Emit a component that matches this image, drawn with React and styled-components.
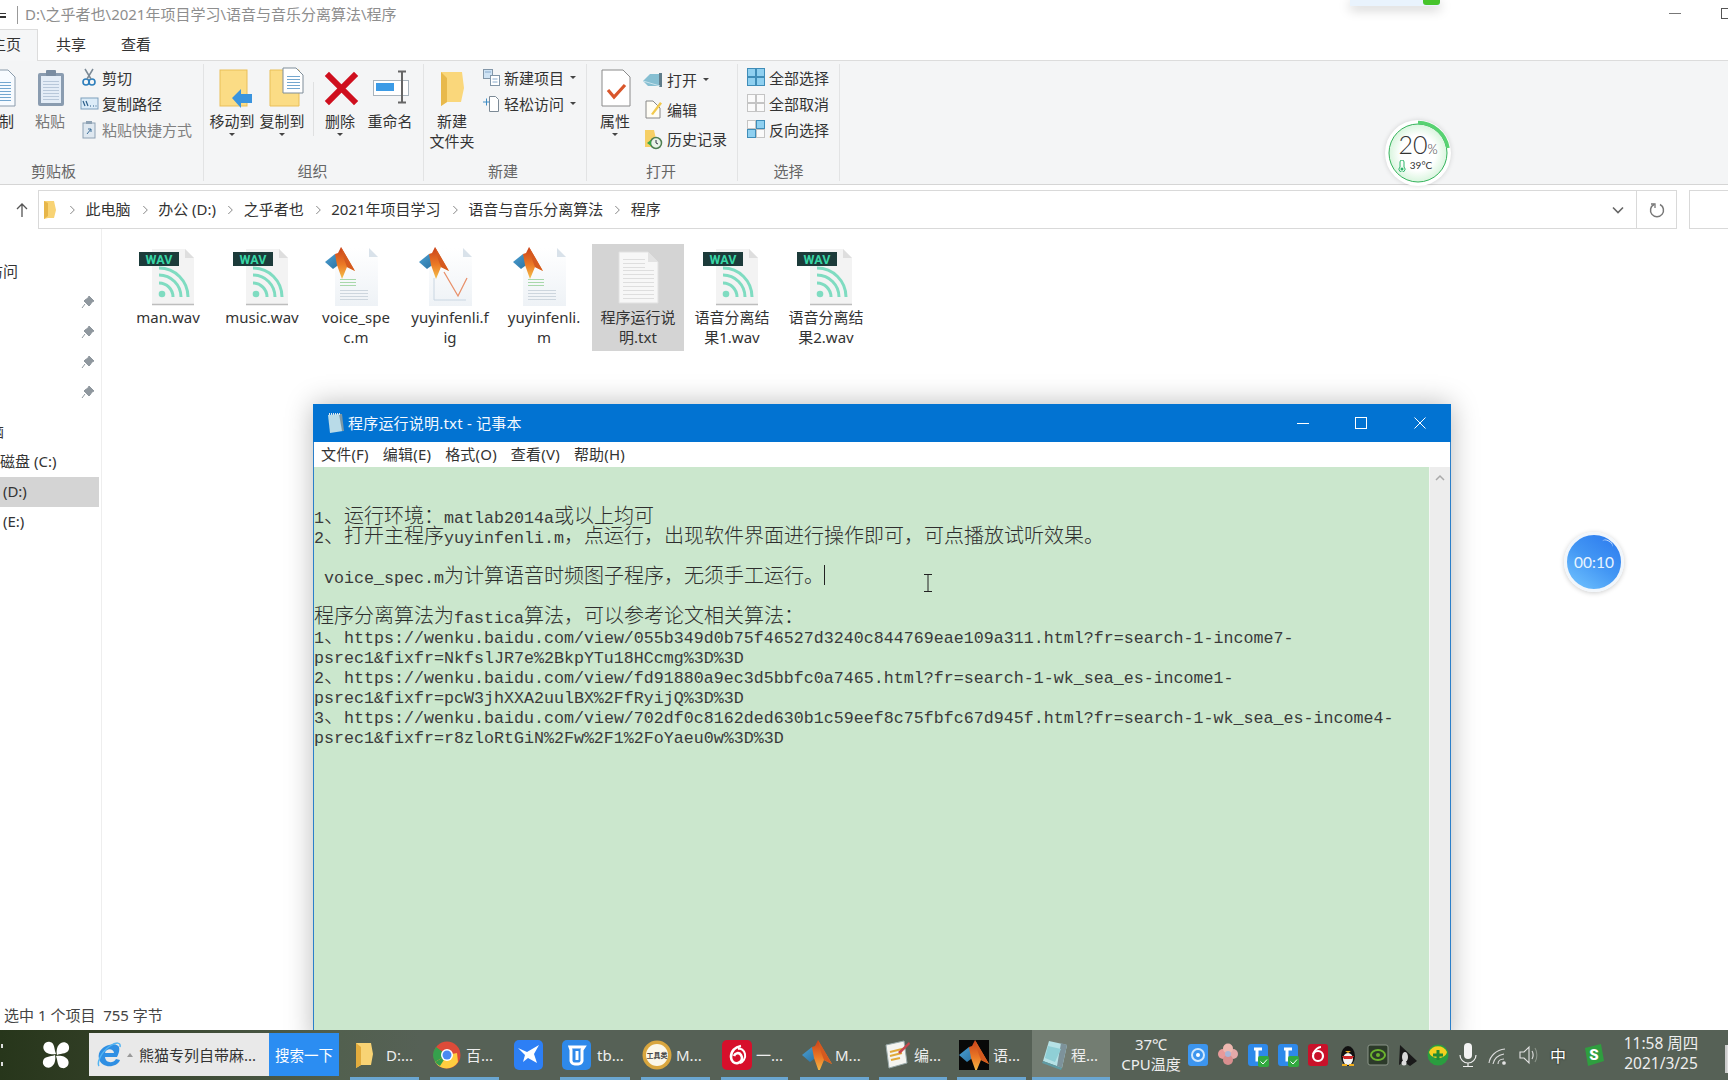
import React from "react";
import styled, { createGlobalStyle } from "styled-components";

const UI = `"Noto Sans", "Noto Sans CJK SC", sans-serif`;

const Global = createGlobalStyle`
  html, body { margin: 0; padding: 0; background: #fff; }
  * { box-sizing: border-box; }
`;

const Page = styled.div`
  position: relative; width: 1728px; height: 1080px; overflow: hidden;
  display: flex; flex-direction: column; font-family: ${UI}; font-size: 15px; color: #333; background: #fff;
`;
const Explorer = styled.div`flex: 1; display: flex; flex-direction: column; min-height: 0;`;

/* ---------- title + tabs ---------- */
const TitleRow = styled.div`height: 30px; display: flex; align-items: center; flex: none;`;
const QuickGlyph = styled.span`width: 6px; height: 5px; border-top: 1px solid #333; border-bottom: 2px solid #333; margin-right: 11px;`;
const TitleDivider = styled.span`width: 1px; height: 18px; background: #999; margin-right: 7px;`;
const TitlePath = styled.span`color: #8e8e8e; font-size: 15px; line-height: 20px; white-space: nowrap; padding-bottom: 2px;`;
const WinMin = styled.span`width: 12px; height: 1px; background: #777; margin-left: auto; margin-right: 40px; margin-top: -3px;`;
const WinMax = styled.span`width: 7px; height: 11px; border: 1px solid #555; border-right: 0; margin-top: -4px;`;

const TabRow = styled.div`height: 30px; display: flex; flex: none;`;
const Tab = styled.div`
  width: ${p => p.$w}px; margin-left: ${p => p.$ml || 0}px; display: flex; align-items: center; justify-content: center;
  white-space: nowrap; font-size: 15px; padding-bottom: 4px;
  ${p => p.$active && `background:#f5f6f7; border:1px solid #dcdcdc; border-bottom:0; height:32px; margin-top:-1px; position:relative; z-index:1;`}
`;

/* ---------- ribbon ---------- */
const Ribbon = styled.div`height: 125px; flex: none; display: flex; background: #f4f5f6; border-top: 1px solid #dcdcdc; border-bottom: 1px solid #d5d5d5; overflow: hidden;`;
const Group = styled.div`
  width: ${p => p.$w}px; flex: none; display: flex; flex-direction: column; position: relative;
  border-right: 1px solid #e2e3e4; margin: 3px 0;
`;
const GroupBody = styled.div`flex: 1; display: flex; padding: 2px 0 0 ${p => p.$pl || 0}px; gap: ${p => p.$gap || 0}px;`;
const GroupLabel = styled.div`
  height: 20px; margin-bottom: 0; color: #666; font-size: 15px; line-height: 20px; white-space: nowrap;
  text-align: center; padding-right: ${p => p.$pr || 0}px;
`;
const BigButton = styled.div`
  width: ${p => p.$w}px; flex: none; display: flex; flex-direction: column; align-items: center;
  margin-left: ${p => p.$ml || 0}px; color: ${p => p.$muted ? "#777" : "#333"};
`;
const BigIcon = styled.svg`width: 44px; height: 44px; flex: none; overflow: visible;`;
const BigLabel = styled.div`font-size: 15px; line-height: 20px; margin-top: 1px; white-space: nowrap; text-align: center;`;
const Caret = styled.span`
  display: inline-block; flex: none; width: 0; height: 0; border-left: 3px solid transparent; border-right: 3px solid transparent;
  border-top: 3px solid #444; margin-top: ${p => p.$mt || 0}px; margin-left: ${p => p.$ml || 0}px;
`;
const VSep = styled.span`width: 1px; height: 54px; background: #dfe0e1; margin: 16px 1px 0 6px; flex: none;`;
const SmallCol = styled.div`display: flex; flex-direction: column; margin-top: ${p => p.$mt || 0}px; margin-left: ${p => p.$ml || 0}px;`;
const SmallRow = styled.div`
  height: ${p => p.$h}px; display: flex; align-items: center; white-space: nowrap; font-size: 15px;
  color: ${p => p.$muted ? "#808080" : "#333"};
`;
const SmallIconBox = styled.svg`width: ${p => p.$w}px; height: 20px; flex: none; margin-right: ${p => p.$mr}px; overflow: visible;`;

/* ---------- address bar ---------- */
const AddressRow = styled.div`height: 44px; flex: none; display: flex; padding-top: 5px; background: #fff;`;
const UpArrow = styled.svg`width: 14px; height: 16px; margin: 12px 9px 0 15px; flex: none;`;
const AddressBox = styled.div`width: 1639px; flex: none; display: flex; align-items: center; border: 1px solid #d9d9d9; padding-left: 5px;`;
const AddrFolder = styled.svg`width: 12px; height: 18px; flex: none; margin-right: 2px;`;
const Chev = styled.svg`width: 27.600px; height: 10px; flex: none;`;
const Crumb = styled.span`font-size: 15px; color: #333; white-space: nowrap; line-height: 20px; padding-bottom: 2px;`;
const AddrEnd = styled.div`margin-left: auto; display: flex; height: 100%; align-items: center;`;
const AddrDrop = styled.svg`width: 12px; height: 8px; margin-right: 12px;`;
const AddrRefresh = styled.div`width: 40px; height: 100%; border-left: 1px solid #d9d9d9; display: flex; align-items: center; justify-content: center;`;
const SearchStub = styled.div`margin-left: 12px; flex: 1; border: 1px solid #d9d9d9; border-right: 0;`;

/* ---------- body ---------- */
const Body = styled.div`flex: 1; display: flex; min-height: 0;`;
const Sidebar = styled.div`width: 102px; flex: none; border-right: 1px solid #eee; padding-top: 28px; overflow: hidden;`;
const NavRow = styled.div`
  height: 30px; width: 99px; display: flex; align-items: center; justify-content: space-between; padding-right: 4px;
  background: ${p => p.$sel ? "#d4d4d4" : "transparent"}; margin-top: ${p => p.$mt || 0}px; white-space: nowrap; font-size: 15px;
`;
const NavText = styled.span`margin-left: ${p => p.$ml || 0}px; padding-bottom: 3px;`;
const Pin = styled.svg`width: 14px; height: 14px; margin-left: auto;`;
const Files = styled.div`flex: 1; display: flex; padding: 15px 0 0 20px; gap: 2px; align-items: flex-start;`;
const FileItem = styled.div`
  width: 92px; height: 107px; flex: none; display: flex; flex-direction: column; align-items: center; padding-top: 2px;
  background: ${p => p.$sel ? "#d4d4d4" : "transparent"};
`;
const FileSvg = styled.svg`width: 60px; height: 60px; flex: none; overflow: visible;`;
const FileName = styled.div`
  margin-top: 1px; font-size: 15px; line-height: 20px; text-align: center; white-space: pre; color: #333;
`;
const Status = styled.div`height: 30px; flex: none; display: flex; align-items: center; padding: 0 0 2px 4px; font-size: 15px; color: #444; white-space: pre;`;

/* ---------- taskbar ---------- */
const Taskbar = styled.div`
  height: 50px; flex: none; display: flex; position: relative; z-index: 3; color: #f2f2f2;
  background: linear-gradient(90deg, #27361b 0, #303d24 90px, #52604f 340px, #566156 420px, #566156 100%);
`;
const StartArea = styled.div`width: 89px; flex: none; display: flex; align-items: center;`;
const StartMark = styled.span`width: 2px; height: 22px; margin-left: 1px; border-top: 4px solid #ddd; border-bottom: 4px solid #ddd; background: transparent;`;
const Pinwheel = styled.svg`width: 28px; height: 28px; margin-left: 39px; flex: none;`;
const SearchWidget = styled.div`width: 250px; height: 43px; margin-top: 3px; flex: none; display: flex; background: #e9e9e9;`;
const SearchField = styled.div`flex: 1; display: flex; align-items: center; color: #333; font-size: 15px; white-space: nowrap; padding-left: 8px;`;
const SearchBtn = styled.div`width: 70px; display: flex; align-items: center; justify-content: center; background: #2b8df2; color: #fff; font-size: 14.5px; white-space: nowrap;`;
const Sup = styled.span`width: 0; height: 0; border-left: 3px solid transparent; border-right: 3px solid transparent; border-bottom: 4px solid #999; margin: 0 6px 0 6px;`;
const TaskItem = styled.div`
  width: ${p => p.$w}px; margin-left: ${p => p.$ml}px; padding-left: ${p => p.$pl}px; flex: none; display: flex; align-items: center; overflow: hidden;
  white-space: nowrap; font-size: 15px; color: #eee;
  background: ${p => p.$active ? "#737d72" : "transparent"};
  border-bottom: 3px solid ${p => p.$bar ? "#6aa6d1" : "transparent"}; padding-top: 2px;
`;
const TaskIconSvg = styled.svg`width: 30px; height: 30px; flex: none; margin-right: ${p => p.$mr}px;`;
const Cpu = styled.div`width: 64px; margin-left: 9px; flex: none; text-align: center; font-size: 15px; line-height: 20px; padding-top: 4px; white-space: nowrap; color: #eee;`;
const Tray = styled.div`display: flex; align-items: center; flex: none;`;
const TrayCell = styled.div`width: ${p => p.$w || 30}px; height: 50px; margin-left: ${p => p.$ml || 0}px; display: flex; align-items: center; justify-content: center; flex: none;`;
const TrayGlyph = styled.svg`width: 22px; height: 24px; overflow: visible;`;
const Ime = styled.span`font-size: 16px; color: #fff; text-shadow: 0 0 2px #000;`;
const Clock = styled.div`width: 100px; margin-left: 2px; flex: none; text-align: center; font-size: 15.5px; line-height: 20px; padding-top: 3px; white-space: nowrap; color: #eee;`;
const ShowDesk = styled.span`width: 4px; height: 28px; margin: 15px 0 0 14px; background: #ddd; border-left: 2px solid #ccc; flex: none;`;

/* ---------- notepad window ---------- */
const Notepad = styled.div`
  position: absolute; left: 313px; top: 404px; width: 1138px; height: 640px; z-index: 2; display: flex; flex-direction: column;
  border-left: 1px solid #2b7fc9; border-right: 1px solid #2b7fc9; box-shadow: 0 0 26px rgba(0,0,0,.28); background: #fff;
`;
const NpTitle = styled.div`height: 38px; flex: none; background: #0273d2; display: flex; align-items: center; color: #f4f9ff; font-size: 15px; letter-spacing: .2px; white-space: nowrap; margin: 0 -1px; padding-left: 12px;`;
const NpTitleText = styled.span`padding-bottom: 2px;`;
const NpIcon = styled.svg`width: 20px; height: 22px; margin-right: 3px; flex: none;`;
const NpCtrls = styled.div`margin-left: auto; display: flex; align-items: center;`;
const NpCtrl = styled.svg`width: 12px; height: 12px; margin-left: ${p => p.$ml}px; margin-right: ${p => p.$mr || 0}px;`;
const NpMenu = styled.div`height: 25px; flex: none; display: flex; align-items: center; gap: 14px; padding: 0 0 2px 7px; font-size: 15px; letter-spacing: .2px; color: #333; white-space: nowrap; background: #fff;`;
const NpArea = styled.div`flex: 1; display: flex; min-height: 0; background: #cbe7cd;`;
const NpText = styled.div`flex: 1; margin-top: -2px; font-family: "Noto Sans CJK SC", sans-serif; font-size: 20px; font-weight: 300; color: #2e2e2e; position: relative;`;
const NpLine = styled.div`height: 20px; line-height: 20px; white-space: pre;`;
const Mono = styled.span`font-family: "Liberation Mono", monospace; font-size: 16.670px; font-weight: 400; color: #3a3a3a;`;
const TextCaret = styled.span`display: inline-block; width: 1px; height: 20px; background: #222; vertical-align: top;`;
const IBeam = styled.svg`position: absolute; left: 609px; top: 109px; width: 10px; height: 18px;`;
const NpScroll = styled.div`width: 21px; flex: none; background: #ededed; display: flex; justify-content: center; padding-top: 7px; border-left: 1px solid #f6f6f6;`;
const NpScrollUp = styled.svg`width: 10px; height: 7px;`;

/* ---------- floating widgets ---------- */
const TopStrip = styled.div`position: absolute; left: 1350px; top: 0; width: 90px; height: 6px; background: #e9f3fd; box-shadow: 0 3px 12px rgba(0,0,0,.25); z-index: 2;`;
const TopStripBadge = styled.span`position: absolute; right: 0; top: 0; width: 17px; height: 5px; background: #46c42b; border-radius: 0 0 3px 3px;`;
const Gauge = styled.div`
  position: absolute; left: 1385px; top: 120px; width: 66px; height: 66px; border-radius: 50%; z-index: 2; background: #fff; box-shadow: 0 0 5px rgba(0,0,0,.14);
  display: flex; flex-direction: column; align-items: center;
`;
const GaugeArt = styled.svg`position: absolute; inset: 0; width: 66px; height: 66px;`;
const GaugeTherm = styled.svg`position: absolute; left: 13px; top: 40px; width: 8px; height: 12px;`;
const GaugeMain = styled.div`position: relative; margin-top: 11px; height: 27px; font-family: Lato, sans-serif; font-weight: 300; font-size: 25px; line-height: 27px; color: #333; white-space: nowrap;`;
const GaugePct = styled.span`font-size: 13px;`;
const GaugeTemp = styled.div`position: relative; font-size: 10px; line-height: 12px; color: #333; padding-left: 6px; margin-top: 1px; font-family: Lato, sans-serif;`;
const Timer = styled.div`
  position: absolute; left: 1564px; top: 532px; width: 60px; height: 60px; border-radius: 50%; z-index: 2; border: 3px solid #f1f6fb;
  background: linear-gradient(215deg, #2a78ee 0%, #4397f4 50%, #74c6ff 100%); box-shadow: 0 1px 5px rgba(0,0,0,.2);
  display: flex; align-items: center; justify-content: center; color: #e9f4ff; font-size: 15.500px; white-space: nowrap; font-family: Lato, "Noto Sans", sans-serif;
  &::before { content: ""; position: absolute; left: 34px; top: 5px; width: 12px; height: 8px; border-top: 1.500px solid rgba(255,255,255,.75); border-radius: 50%; transform: rotate(30deg); }
`;

/* ---------- drawings ---------- */
const Doc = ({ x, y, w, h, c = "#f7fbff", s = "#8a9bab" }) => (
  <path d={`M${x} ${y}h${w - 7}l7 7v${h - 7}h-${w}z`} fill={c} stroke={s} strokeWidth="1" />
);
const Lines = ({ x, y, w, n, d = 3, c = "#74a7cf" }) => (
  <g stroke={c} strokeWidth="1">{Array.from({ length: n }, (_, i) => <path key={i} d={`M${x} ${y + i * d + .5}h${w}`} />)}</g>
);
const BI = ({ children }) => <BigIcon viewBox="0 0 44 44">{children}</BigIcon>;

const CopyBig = () => <BI><Doc x={14} y={4} w={24} h={36} /><Lines x={18} y={16} w={16} n={7} /></BI>;
const PasteBig = () => <BI><rect x="10" y="7" width="26" height="33" rx="2" fill="#8a9cb0" /><rect x="13" y="10" width="20" height="27" fill="#e4edf7" /><Lines x={15} y={15} w={16} n={7} c="#b8c8da" /><rect x="18" y="4" width="10" height="6" rx="1" fill="#7a8da2" /></BI>;
const MoveBig = () => <BI><rect x="10" y="4" width="27" height="36" fill="#fbdc85" stroke="#e9bf58" /><path d="M22 32l9-9v5h11v9H31v5z" fill="#3a94de" /></BI>;
const CopyToBig = () => <BI><path d="M10 4h29v36H10z" fill="#fbdc85" stroke="#e9bf58" /><Doc x={23} y={2} w={20} h={25} c="#fff" s="#7f8d99" /><Lines x={27} y={10} w={13} n={5} /></BI>;
const DeleteBig = () => <BI><path d="M11 10l25 25M36 10L11 35" stroke="#cf0f1e" strokeWidth="6" strokeLinecap="square" /></BI>;
const RenameBig = () => <BI><rect x="5.500" y="14.500" width="35" height="15" fill="#fff" stroke="#a9b4bd" /><rect x="8" y="17" width="18" height="8" fill="#3b9be6" /><path d="M34 6v30M30 5.500h8M30 36.500h8" stroke="#666" strokeWidth="2" fill="none" /></BI>;
const FolderBig = () => <BI><path d="M11 6h21l2 16-3 14H17l-6 4z" fill="#fad77b" /><path d="M11 6l6 6v24l-6 4z" fill="#e8b94c" /></BI>;
const PropsBig = () => <BI><Doc x={9} y={4} w={28} h={36} c="#fff" s="#8a8a8a" /><path d="M15 24l6 7 11-12" fill="none" stroke="#d9562b" strokeWidth="3.200" /></BI>;

const SI = ({ w = 20, mr = 2, children }) => <SmallIconBox $w={w} $mr={mr} viewBox={`0 0 ${w} 20`}>{children}</SmallIconBox>;
const Scissors = () => <SI><circle cx="6" cy="15" r="3" fill="none" stroke="#2e7fbc" strokeWidth="1.600" /><circle cx="12" cy="15" r="3" fill="none" stroke="#2e7fbc" strokeWidth="1.600" /><path d="M7 12L13 2M11 12L5 2" stroke="#7b8a96" strokeWidth="1.500" /></SI>;
const CopyPathIc = () => <SI><rect x="1" y="5" width="17" height="11" fill="#dcecf8" stroke="#7d9fbc" /><path d="M3 8l2 5M6 8l2 5" stroke="#2d5f8a" strokeWidth="1.200" /><path d="M10 13h1M13 13h1M15.500 13h1" stroke="#2d5f8a" /></SI>;
const PasteLink = () => <SI><rect x="3" y="4" width="12" height="15" fill="#dfe8f0" stroke="#8ea2b4" /><rect x="6" y="2" width="6" height="3" fill="#8ea2b4" /><path d="M7 15l4-5M8 10h3v3" stroke="#3d6f99" fill="none" /></SI>;
const NewItemIc = () => <SI><rect x="1.500" y="2.500" width="9" height="9" fill="#cfe3f4" stroke="#8296a8" /><rect x="8.500" y="8.500" width="9" height="10" fill="#fff" stroke="#8296a8" /><path d="M3 5h6M10.500 12h5M10.500 15h5" stroke="#88aacc" /></SI>;
const EasyIc = () => <SI><path d="M7.500 3.500h6l3 3v12h-9z" fill="#fff" stroke="#7c8a96" /><path d="M1 9h7M4.500 5.500v7" stroke="#3f8cc4" /></SI>;
const OpenIc = () => <SI w={22} mr={3}><path d="M1 11L8 4h11v12H6z" fill="#86bfd2" /><path d="M17 3h3v14h-3z" fill="#607d8b" /><path d="M1 11l17 5" stroke="#c8e3ec" /></SI>;
const EditIc = () => <SI w={22} mr={3}><Doc x={4} y={2} w={14} h={17} c="#fffdf5" s="#888" /><path d="M9 15L18 3l2 1.500L11 16z" fill="#f2c94c" /></SI>;
const HistIc = () => <SI w={22} mr={3}><path d="M3 1h9l2 9-2 8H3z" fill="#f6cf65" /><circle cx="14" cy="14" r="5.500" fill="#e9f3e9" stroke="#4f7e52" strokeWidth="1.500" /><path d="M14 11v3l2 1" stroke="#334" fill="none" /><path d="M5 14l4-3v6z" fill="#3aa84a" /></SI>;
const Quad = ({ on }) => (
  <SI w={18} mr={4}>
    {[[1, 1], [10, 1], [1, 10], [10, 10]].map(([x, y], i) => (
      <rect key={i} x={x - .5} y={y + .5} width="8" height="8" fill={on[i] ? "#8fd0f0" : "#fafafa"} stroke={on[i] ? "#3f8db8" : "#c4c4c4"} />
    ))}
  </SI>
);

const WaveFile = () => (
  <FileSvg viewBox="0 0 60 60">
    <path d="M14 3h33l9 9v47H14z" fill="#f3f3f3" />
    <path d="M47 3l9 9h-9z" fill="#dedede" />
    <path d="M14 58.500h42" stroke="#bdbdbd" strokeWidth="1.500" />
    <rect x="1" y="6" width="40" height="14" fill="#1c3b3a" />
    <text x="21" y="17.500" textAnchor="middle" fontFamily="Roboto, sans-serif" fontWeight="700" fontSize="12.500" fill="#38d6a6">WAV</text>
    <circle cx="24" cy="48" r="3.300" fill="#7fdcc1" />
    <g fill="none" stroke="#7fdcc1" strokeWidth="3">
      <path d="M21 37a14 14 0 0 1 14 14" /><path d="M21 29a22 22 0 0 1 22 22" /><path d="M21 22a29 29 0 0 1 29 29" />
    </g>
  </FileSvg>
);
const LogoDefs = () => (
  <defs>
    <linearGradient id="mlBody" x1="0" y1="0" x2="0" y2="1">
      <stop offset="0" stopColor="#c8401a" /><stop offset=".55" stopColor="#ec7a26" /><stop offset="1" stopColor="#f4c04a" />
    </linearGradient>
    <linearGradient id="mlWing" x1="0" y1="0" x2="1" y2="1">
      <stop offset="0" stopColor="#4aa0d4" /><stop offset="1" stopColor="#2a6f9e" />
    </linearGradient>
  </defs>
);
const MatlabLogo = ({ ox = 0, oy = 0, s = 1 }) => (
  <g transform={`translate(${ox} ${oy}) scale(${s})`}>
    <path d="M0 15L10 7l6 9-8 6z" fill="url(#mlWing)" />
    <path d="M10 7l3-1 3-6 14 24-8-4-5 12-5-14z" fill="url(#mlBody)" />
    <path d="M16 0l14 24-8-4-3-8z" fill="#d55a1f" />
  </g>
);
const MatlabFile = ({ fig }) => (
  <FileSvg viewBox="0 0 60 60">
    <defs><linearGradient id="mf" x1="0" y1="0" x2="0" y2="1"><stop offset="0" stopColor="#fff" /><stop offset="1" stopColor="#eef2f6" /></linearGradient></defs>
    <path d="M9 2h34l9 9v49H9z" fill="url(#mf)" />
    <path d="M43 2l9 9h-9z" fill="#d9e2ea" />
    {fig ? (
      <g fill="none">
        <path d="M14 32v22h32" stroke="#c9d6e2" />
        <path d="M24 26l14 24 9-18" stroke="#e8906a" strokeWidth="1.300" />
      </g>
    ) : (
      <g>
        <Lines x={14} y={33} w={16} n={3} d={3} c="#a8d8aa" />
        <Lines x={14} y={44} w={28} n={4} d={3} c="#cdd6de" />
      </g>
    )}
    <MatlabLogo ox={-1} oy={1} />
  </FileSvg>
);
const TxtFile = () => (
  <FileSvg viewBox="0 0 60 60">
    <path d="M11 6h29l10 10v41H11z" fill="#f7f7f7" stroke="#e1e1e1" />
    <path d="M40 6l10 10H40z" fill="#e3e3e3" />
    <Lines x={15} y={13} w={22} n={3} d={4} c="#dedede" />
    <Lines x={15} y={24} w={31} n={8} d={4} c="#dedede" />
  </FileSvg>
);

const T = ({ mr = 6, children }) => <TaskIconSvg $mr={mr} viewBox="0 0 30 30">{children}</TaskIconSvg>;
const TaskFolder = () => <T mr={6}><path d="M6 3h15l2 11-2 11H11l-5 3z" fill="#f8d374" /><path d="M6 3l5 4v18l-5 3z" fill="#e2ac3d" /></T>;
const Chrome = () => <T mr={4}><circle cx="15" cy="15" r="13.500" fill="#dd4b39" /><path d="M15 15L3 22A13.500 13.500 0 0 1 4 7z" fill="#35a04c" /><path d="M15 15L3 22a13.500 13.500 0 0 0 23 0l-1-9z" fill="#ffcd40" /><path d="M15 15l-7 11a13.500 13.500 0 0 1-5-4z" fill="#35a04c" /><circle cx="15" cy="15" r="6" fill="#fff" /><circle cx="15" cy="15" r="4.500" fill="#4a89f3" /></T>;
const Bird = () => <T mr={0}><rect width="29" height="30" rx="5" fill="#2d7ff5" /><path d="M4 8l9 4 12-7-5 9 3 9-9-5-5 4 2-7z" fill="#fff" /></T>;
const TbIc = () => <T mr={5}><rect width="29" height="30" rx="5" fill="#2e89ea" /><path d="M8 7h14l-2 3v11a4 4 0 0 1-4 3h-3a4 4 0 0 1-4-3V10z" fill="none" stroke="#fff" strokeWidth="3" /><path d="M15 11v9" stroke="#fff" strokeWidth="3" /></T>;
const Coin = () => <T mr={4}><circle cx="15" cy="15" r="14.500" fill="#d9a63e" /><circle cx="15" cy="15" r="11" fill="#fbf7e9" /><text x="15" y="18" textAnchor="middle" fontSize="7" fontWeight="700" fill="#444" fontFamily="Noto Sans CJK SC, sans-serif">工具类</text></T>;
const Netease = () => <T mr={4}><rect width="30" height="30" rx="5" fill="#d70f2b" /><path d="M19 6c-6 1-10 5-10 11 0 4 3 7 7 6s5-5 3-8-6-2-7 1" fill="none" stroke="#fff" strokeWidth="2.600" /><path d="M16 9c3-1 6 1 7 5s-2 8-5 9" fill="none" stroke="#fff" strokeWidth="2" /></T>;
const MatlabT = () => <T mr={3}><MatlabLogo ox={0} oy={0} s={1} /></T>;
const EditT = () => <T mr={2}><path d="M4 5l18-4 3 22-18 5z" fill="#f4f4f0" stroke="#9aa" /><path d="M8 12l12-3M8 16l12-3M9 20l9-2" stroke="#e0a93a" strokeWidth="2" /><path d="M16 12L27 2l1 2-10 10z" fill="#c7474e" /></T>;
const MatlabBlack = () => <T mr={4}><rect width="30" height="30" fill="#080808" /><MatlabLogo ox={0} oy={0} s={1} /></T>;
const NoteT = () => <T mr={1}><path d="M9 1l18 4-5 23L3 21z" fill="#b6e2e6" /><path d="M21 3l6 2-5 23-5-2z" fill="#7d929a" /><path d="M3 21l19 7-1 2L2 23z" fill="#5f9ba4" /><path d="M8 6l13 3L15 22 5 18z" fill="#8fcfd6" /></T>;
const IE = () => <svg width="24" height="28" viewBox="0 0 24 28"><path d="M20 16H8c.5 6 8 7 11 2l4 1c-3 8-18 9-21-1C0 10 7 5 12 4c6-2 9 0 10 2 1 4-1 8-2 10z M8 12h9c-.5-5-8-5-9 0z" fill="#2f8fe3" fillRule="evenodd" /><path d="M2 25C0 22 3 12 13 5c6-4 11-4 10 1" fill="none" stroke="#52b4f2" strokeWidth="1.500" /></svg>;

const trayDraw = [
  <g key="a"><rect x="1" y="1" width="20" height="22" rx="3" fill="#3c95ee" /><circle cx="11" cy="12" r="6" fill="none" stroke="#cfe6fb" strokeWidth="2" /><circle cx="11" cy="12" r="2" fill="#fff" /></g>,
  <g key="b"><circle cx="6" cy="11" r="5" fill="#e89a9a" /><circle cx="16" cy="11" r="5" fill="#e4a9a9" /><circle cx="11" cy="5.500" r="5" fill="#eeb8b0" /><circle cx="11" cy="17" r="5" fill="#d98f8f" /><circle cx="11" cy="11" r="3" fill="#a8b6d8" /></g>,
  <g key="c"><rect x="1" y="1" width="20" height="22" rx="3" fill="#2e89ea" /><path d="M7 6h8M10 6v11h5" stroke="#fff" strokeWidth="3" fill="none" /><rect x="11" y="13" width="11" height="11" rx="2" fill="#31a93f" /><path d="M13.500 18.500l2.500 2.500 4-4.500" stroke="#fff" fill="none" /></g>,
  <g key="d"><rect x="1" y="1" width="20" height="22" rx="3" fill="#2e89ea" /><path d="M7 6h8M10 6v11h5" stroke="#fff" strokeWidth="3" fill="none" /><rect x="11" y="13" width="11" height="11" rx="2" fill="#31a93f" /><path d="M13.500 18.500l2.500 2.500 4-4.500" stroke="#fff" fill="none" /></g>,
  <g key="e"><rect x="1" y="1" width="20" height="22" rx="3" fill="#c9122a" /><circle cx="11" cy="13" r="5" fill="none" stroke="#fff" strokeWidth="2.200" /><path d="M14 4c-3 0-6 3-8 7" fill="none" stroke="#fff" strokeWidth="2.200" /></g>,
  <g key="f"><ellipse cx="11" cy="13" rx="7" ry="10" fill="#111" /><ellipse cx="11" cy="16" rx="5" ry="6" fill="#f4f4f4" /><path d="M5 13h12l-2 3H7z" fill="#d0282a" /><path d="M8 8h6l-3 2z" fill="#f2b01e" /><path d="M5 22h5M12 22h5" stroke="#f2b01e" strokeWidth="2" /></g>,
  <g key="g"><rect x="1" y="2" width="20" height="20" rx="2" fill="#2c3a2a" stroke="#8a9488" /><ellipse cx="11" cy="12" rx="7" ry="5" fill="none" stroke="#6bb22e" strokeWidth="2" /><circle cx="11" cy="12" r="2" fill="#6bb22e" /></g>,
  <g key="h"><path d="M3 2l17 16-7 5-6-4-5 3z" fill="#1a1a1a" /><ellipse cx="8" cy="14" rx="3" ry="5" fill="#d8d8d8" /><circle cx="7" cy="20" r="2.500" fill="#ddd" /></g>,
  <g key="i"><circle cx="11" cy="12" r="10.500" fill="#2a9d3f" /><path d="M2 9a10 10 0 0 1 18 0c-2 8-16 8-18 0z" fill="#f4d01f" /><path d="M11 7v10M6 12h10" stroke="#238a33" strokeWidth="3" /></g>,
  <g key="j"><rect x="7" y="0" width="8" height="16" rx="4" fill="#f4f4f4" /><path d="M3 12a8 8 0 0 0 16 0M11 20v3M6 23.500h10" stroke="#eee" strokeWidth="1.200" fill="none" /></g>,
  <g key="k" fill="none" stroke="#ddd" strokeWidth="1.100"><path d="M2 20C3 13 9 7 18 6" /><path d="M6 21c1-5 5-9 11-10" /><path d="M11 21c0-3 2-5 6-5" /><circle cx="17" cy="20" r="1.300" fill="#eee" /></g>,
  <g key="l" fill="none" stroke="#e4e4e4" strokeWidth="1.100"><path d="M3 9h4l5-5v16l-5-5H3z" /><path d="M15 8c1.500 2 1.500 6 0 8" /><path d="M18 5c2.500 4 2.500 10 0 14" stroke="#8b948a" /></g>,
];

/* ---------- text helpers ---------- */
const mixed = s => s.split(/([\u3000-\u9fff\uff00-\uffef]+)/).map((part, i) =>
  i % 2 ? part : part && <Mono key={i}>{part}</Mono>
);

const noteLines = [
  "", "",
  "1、运行环境：matlab2014a或以上均可",
  "2、打开主程序yuyinfenli.m，点运行，出现软件界面进行操作即可，可点播放试听效果。",
  "",
  " voice_spec.m为计算语音时频图子程序，无须手工运行。",
  "",
  "程序分离算法为fastica算法，可以参考论文相关算法：",
  "1、https://wenku.baidu.com/view/055b349d0b75f46527d3240c844769eae109a311.html?fr=search-1-income7-",
  "psrec1&fixfr=NkfslJR7e%2BkpYTu18HCcmg%3D%3D",
  "2、https://wenku.baidu.com/view/fd91880a9ec3d5bbfc0a7465.html?fr=search-1-wk_sea_es-income1-",
  "psrec1&fixfr=pcW3jhXXA2uulBX%2FfRyijQ%3D%3D",
  "3、https://wenku.baidu.com/view/702df0c8162ded630b1c59eef8c75fbfc67d945f.html?fr=search-1-wk_sea_es-income4-",
  "psrec1&fixfr=r8zloRtGiN%2Fw%2F1%2FoYaeu0w%3D%3D",
];

const crumbs = ["此电脑", "办公 (D:)", "之乎者也", "2021年项目学习", "语音与音乐分离算法", "程序"];
const FigFile = () => <MatlabFile fig />;
const files = [
  ["man.wav", WaveFile], ["music.wav", WaveFile], ["voice_spe\nc.m", MatlabFile],
  ["yuyinfenli.f\nig", FigFile], ["yuyinfenli.\nm", MatlabFile],
  ["程序运行说\n明.txt", TxtFile, true], ["语音分离结\n果1.wav", WaveFile], ["语音分离结\n果2.wav", WaveFile],
];
const tasks = [
  { w: 69, ml: 11, pl: 0, Icon: TaskFolder, label: "D:...", bar: true },
  { w: 69, ml: 11, pl: 2, Icon: Chrome, label: "百...", bar: true },
  { w: 60, ml: 1, pl: 14, Icon: Bird, label: "" },
  { w: 70, ml: 0, pl: 2, Icon: TbIc, label: "tb...", bar: true },
  { w: 69, ml: 11, pl: 1, Icon: Coin, label: "M...", bar: true },
  { w: 67, ml: 11, pl: 1, Icon: Netease, label: "一...", bar: true },
  { w: 69, ml: 12, pl: 2, Icon: MatlabT, label: "M...", bar: true },
  { w: 68, ml: 10, pl: 3, Icon: EditT, label: "编...", bar: true },
  { w: 69, ml: 10, pl: 2, Icon: MatlabBlack, label: "语...", bar: true },
  { w: 78, ml: 6, pl: 8, Icon: NoteT, label: "程...", bar: true, active: true },
];

export default function App() {
  return (
    <Page>
      <Global />
      <svg width="0" height="0"><LogoDefs /></svg>
      <Explorer>
        <TitleRow>
          <QuickGlyph />
          <TitleDivider />
          <TitlePath>D:\之乎者也\2021年项目学习\语音与音乐分离算法\程序</TitlePath>
          <WinMin />
          <WinMax />
        </TitleRow>
        <TabRow>
          <Tab $active $w={64} $ml={-26}>主页</Tab>
          <Tab $w={66}>共享</Tab>
          <Tab $w={64}>查看</Tab>
        </TabRow>
        <Ribbon>
          <Group $w={204}>
            <GroupBody>
              <BigButton $w={40} $ml={-21}><CopyBig /><BigLabel>复制</BigLabel></BigButton>
              <BigButton $w={42} $ml={10} $muted><PasteBig /><BigLabel>粘贴</BigLabel></BigButton>
              <SmallCol $mt={-2} $ml={9}>
                <SmallRow $h={26}><Scissors />剪切</SmallRow>
                <SmallRow $h={26}><CopyPathIc />复制路径</SmallRow>
                <SmallRow $h={26} $muted><PasteLink />粘贴快捷方式</SmallRow>
              </SmallCol>
            </GroupBody>
            <GroupLabel $pr={96}>剪贴板</GroupLabel>
          </Group>
          <Group $w={220}>
            <GroupBody $pl={3}>
              <BigButton $w={50}><MoveBig /><BigLabel>移动到</BigLabel><Caret $mt={2} /></BigButton>
              <BigButton $w={50}><CopyToBig /><BigLabel>复制到</BigLabel><Caret $mt={2} /></BigButton>
              <VSep />
              <BigButton $w={50}><DeleteBig /><BigLabel>删除</BigLabel><Caret $mt={2} /></BigButton>
              <BigButton $w={50}><RenameBig /><BigLabel>重命名</BigLabel></BigButton>
            </GroupBody>
            <GroupLabel $pr={2}>组织</GroupLabel>
          </Group>
          <Group $w={163}>
            <GroupBody $pl={3} $gap={5}>
              <BigButton $w={50}><FolderBig /><BigLabel>新建<br />文件夹</BigLabel></BigButton>
              <SmallCol $mt={-2}>
                <SmallRow $h={26}><NewItemIc />新建项目<Caret $ml={6} /></SmallRow>
                <SmallRow $h={26}><EasyIc />轻松访问<Caret $ml={6} /></SmallRow>
              </SmallCol>
            </GroupBody>
            <GroupLabel $pr={4}>新建</GroupLabel>
          </Group>
          <Group $w={151}>
            <GroupBody $pl={8} $gap={7}>
              <BigButton $w={40}><PropsBig /><BigLabel>属性</BigLabel><Caret $mt={2} /></BigButton>
              <SmallCol $mt={-1}>
                <SmallRow $h={29.500}><OpenIc />打开<Caret $ml={6} /></SmallRow>
                <SmallRow $h={29.500}><EditIc />编辑</SmallRow>
                <SmallRow $h={29.500}><HistIc />历史记录</SmallRow>
              </SmallCol>
            </GroupBody>
            <GroupLabel $pr={2}>打开</GroupLabel>
          </Group>
          <Group $w={102}>
            <GroupBody $pl={9}>
              <SmallCol $mt={-2}>
                <SmallRow $h={26}><Quad on={[1, 1, 1, 1]} />全部选择</SmallRow>
                <SmallRow $h={26}><Quad on={[0, 0, 0, 0]} />全部取消</SmallRow>
                <SmallRow $h={26}><Quad on={[0, 1, 1, 0]} />反向选择</SmallRow>
              </SmallCol>
            </GroupBody>
            <GroupLabel>选择</GroupLabel>
          </Group>
        </Ribbon>
        <AddressRow>
          <UpArrow viewBox="0 0 14 16"><path d="M7 15V2M2 7l5-5 5 5" fill="none" stroke="#555" strokeWidth="1.300" /></UpArrow>
          <AddressBox>
            <AddrFolder viewBox="0 0 12 18"><path d="M0 0h10l2 9-2 8H4l-4 1z" fill="#f8d374" /><path d="M0 0l4 2v13l-4 3z" fill="#e7b649" /></AddrFolder>
            {crumbs.map(c => (
              <React.Fragment key={c}>
                <Chev viewBox="0 0 27 10"><path d="M12 1l4 4-4 4" fill="none" stroke="#888" /></Chev>
                <Crumb>{c}</Crumb>
              </React.Fragment>
            ))}
            <AddrEnd>
              <AddrDrop viewBox="0 0 12 8"><path d="M1 1.500l5 5 5-5" fill="none" stroke="#666" strokeWidth="1.600" /></AddrDrop>
              <AddrRefresh>
                <svg width="16" height="16" viewBox="0 0 16 16"><path d="M5 2.500a6.500 6.500 0 1 0 6 0" fill="none" stroke="#777" strokeWidth="1.500" /><path d="M2 2h4v4" fill="none" stroke="#777" strokeWidth="1.300" /></svg>
              </AddrRefresh>
            </AddrEnd>
          </AddressBox>
          <SearchStub />
        </AddressRow>
        <Body>
          <Sidebar>
            <NavRow><NavText $ml={-42}>快速访问</NavText></NavRow>
            {[0, 1, 2, 3].map(i => (
              <NavRow key={i}>
                <Pin viewBox="0 0 14 14"><path d="M8 1l5 5-2 1-2 3-1 1-5-5 1-1 3-2zM4 9l-3 4" fill="#8f979e" stroke="#8f979e" /></Pin>
              </NavRow>
            ))}
            <NavRow $mt={10}><NavText $ml={-41}>此电脑</NavText></NavRow>
            <NavRow><NavText $ml={-30}>本地磁盘 (C:)</NavText></NavRow>
            <NavRow $sel><NavText $ml={-31}>办公 (D:)</NavText></NavRow>
            <NavRow><NavText $ml={-46}>新加卷 (E:)</NavText></NavRow>
          </Sidebar>
          <Files>
            {files.map(([name, Ic, sel]) => (
              <FileItem key={name} $sel={sel}>
                <Ic />
                <FileName>{name}</FileName>
              </FileItem>
            ))}
          </Files>
        </Body>
        <Status>选中 1 个项目  755 字节</Status>
      </Explorer>
      <Taskbar>
        <StartArea>
          <StartMark />
          <Pinwheel viewBox="0 0 28 28">
            <g fill="#fff">
              <path d="M14 13C12 8 13 2 8 1 3 0 0 5 2 9c2 4 8 5 12 4z" />
              <path d="M15 14c5-2 11-1 12-6 1-5-4-8-8-6-4 2-5 8-4 12z" />
              <path d="M14 15c2 5 1 11 6 12 5 1 8-4 6-8-2-4-8-5-12-4z" />
              <path d="M13 14c-5 2-11 1-12 6-1 5 4 8 8 6 4-2 5-8 4-12z" />
            </g>
          </Pinwheel>
        </StartArea>
        <SearchWidget>
          <SearchField><IE /><Sup />熊猫专列自带麻...</SearchField>
          <SearchBtn>搜索一下</SearchBtn>
        </SearchWidget>
        {tasks.map(({ Icon, label, w, ml, pl, bar, active }, i) => (
          <TaskItem key={i} $w={w} $ml={ml} $pl={pl} $bar={bar} $active={active}>
            <Icon />{label}
          </TaskItem>
        ))}
        <Cpu>37℃<br />CPU温度</Cpu>
        <Tray>
          {trayDraw.map(d => (
            <TrayCell key={d.key}><TrayGlyph viewBox="0 0 22 24">{d}</TrayGlyph></TrayCell>
          ))}
          <TrayCell><Ime>中</Ime></TrayCell>
          <TrayCell $ml={6}>
            <TrayGlyph viewBox="0 0 22 24"><path d="M2 5l16-4 3 17-16 5z" fill="#2f9e3f" /><text x="11" y="17" textAnchor="middle" fontFamily="Roboto, sans-serif" fontWeight="900" fontSize="15" fill="#fff">S</text></TrayGlyph>
          </TrayCell>
        </Tray>
        <Clock>11:58 周四<br />2021/3/25</Clock>
        <ShowDesk />
      </Taskbar>

      <TopStrip><TopStripBadge /></TopStrip>

      <Gauge>
        <GaugeArt viewBox="0 0 66 66">
          <defs><radialGradient id="gg"><stop offset=".6" stopColor="#fff" /><stop offset="1" stopColor="#d9f5de" /></radialGradient></defs>
          <circle cx="33" cy="33" r="29" fill="url(#gg)" stroke="#35b35c" strokeWidth="1" />
          <path d="M33 2.500A30.500 30.500 0 0 1 63 28" fill="none" stroke="#58d272" strokeWidth="3.500" />
        </GaugeArt>
        <GaugeMain>20<GaugePct>%</GaugePct></GaugeMain>
        <GaugeTemp>39°C</GaugeTemp>
        <GaugeTherm viewBox="0 0 8 12">
          <path d="M2 2a2 2 0 0 1 4 0v5a3 3 0 1 1-4 0z" fill="none" stroke="#2db56a" />
          <circle cx="4" cy="9" r="1.500" fill="#2db56a" />
        </GaugeTherm>
      </Gauge>

      <Timer>00:10</Timer>

      <Notepad>
        <NpTitle>
          <NpIcon viewBox="0 0 20 22"><path d="M3 3l12-1 3 17-13 2z" fill="#b9dbe8" /><path d="M14 2h3l2 17h-2z" fill="#7d98a5" /><path d="M4 2h11" stroke="#dfe9ee" strokeWidth="2" strokeDasharray="1 1" /></NpIcon>
          <NpTitleText>程序运行说明.txt - 记事本</NpTitleText>
          <NpCtrls>
            <NpCtrl $ml={0} viewBox="0 0 12 12"><path d="M0 6.500h12" stroke="#fff" /></NpCtrl>
            <NpCtrl $ml={46} viewBox="0 0 12 12"><rect x=".5" y=".5" width="11" height="11" fill="none" stroke="#fff" /></NpCtrl>
            <NpCtrl $ml={47} $mr={25} viewBox="0 0 12 12"><path d="M.5.500l11 11M11.500.500l-11 11" stroke="#fff" /></NpCtrl>
          </NpCtrls>
        </NpTitle>
        <NpMenu>
          <span>文件(F)</span><span>编辑(E)</span><span>格式(O)</span><span>查看(V)</span><span>帮助(H)</span>
        </NpMenu>
        <NpArea>
          <NpText>
            {noteLines.map((l, i) => (
              <NpLine key={i}>{mixed(l)}{i === 5 && <TextCaret />}</NpLine>
            ))}
            <IBeam viewBox="0 0 10 18"><path d="M1 .5h8M1 17.500h8M5 1v16" stroke="#222" fill="none" /></IBeam>
          </NpText>
          <NpScroll>
            <NpScrollUp viewBox="0 0 10 7"><path d="M1 6l4-4 4 4" fill="none" stroke="#aaa" strokeWidth="1.500" /></NpScrollUp>
          </NpScroll>
        </NpArea>
      </Notepad>
    </Page>
  );
}
